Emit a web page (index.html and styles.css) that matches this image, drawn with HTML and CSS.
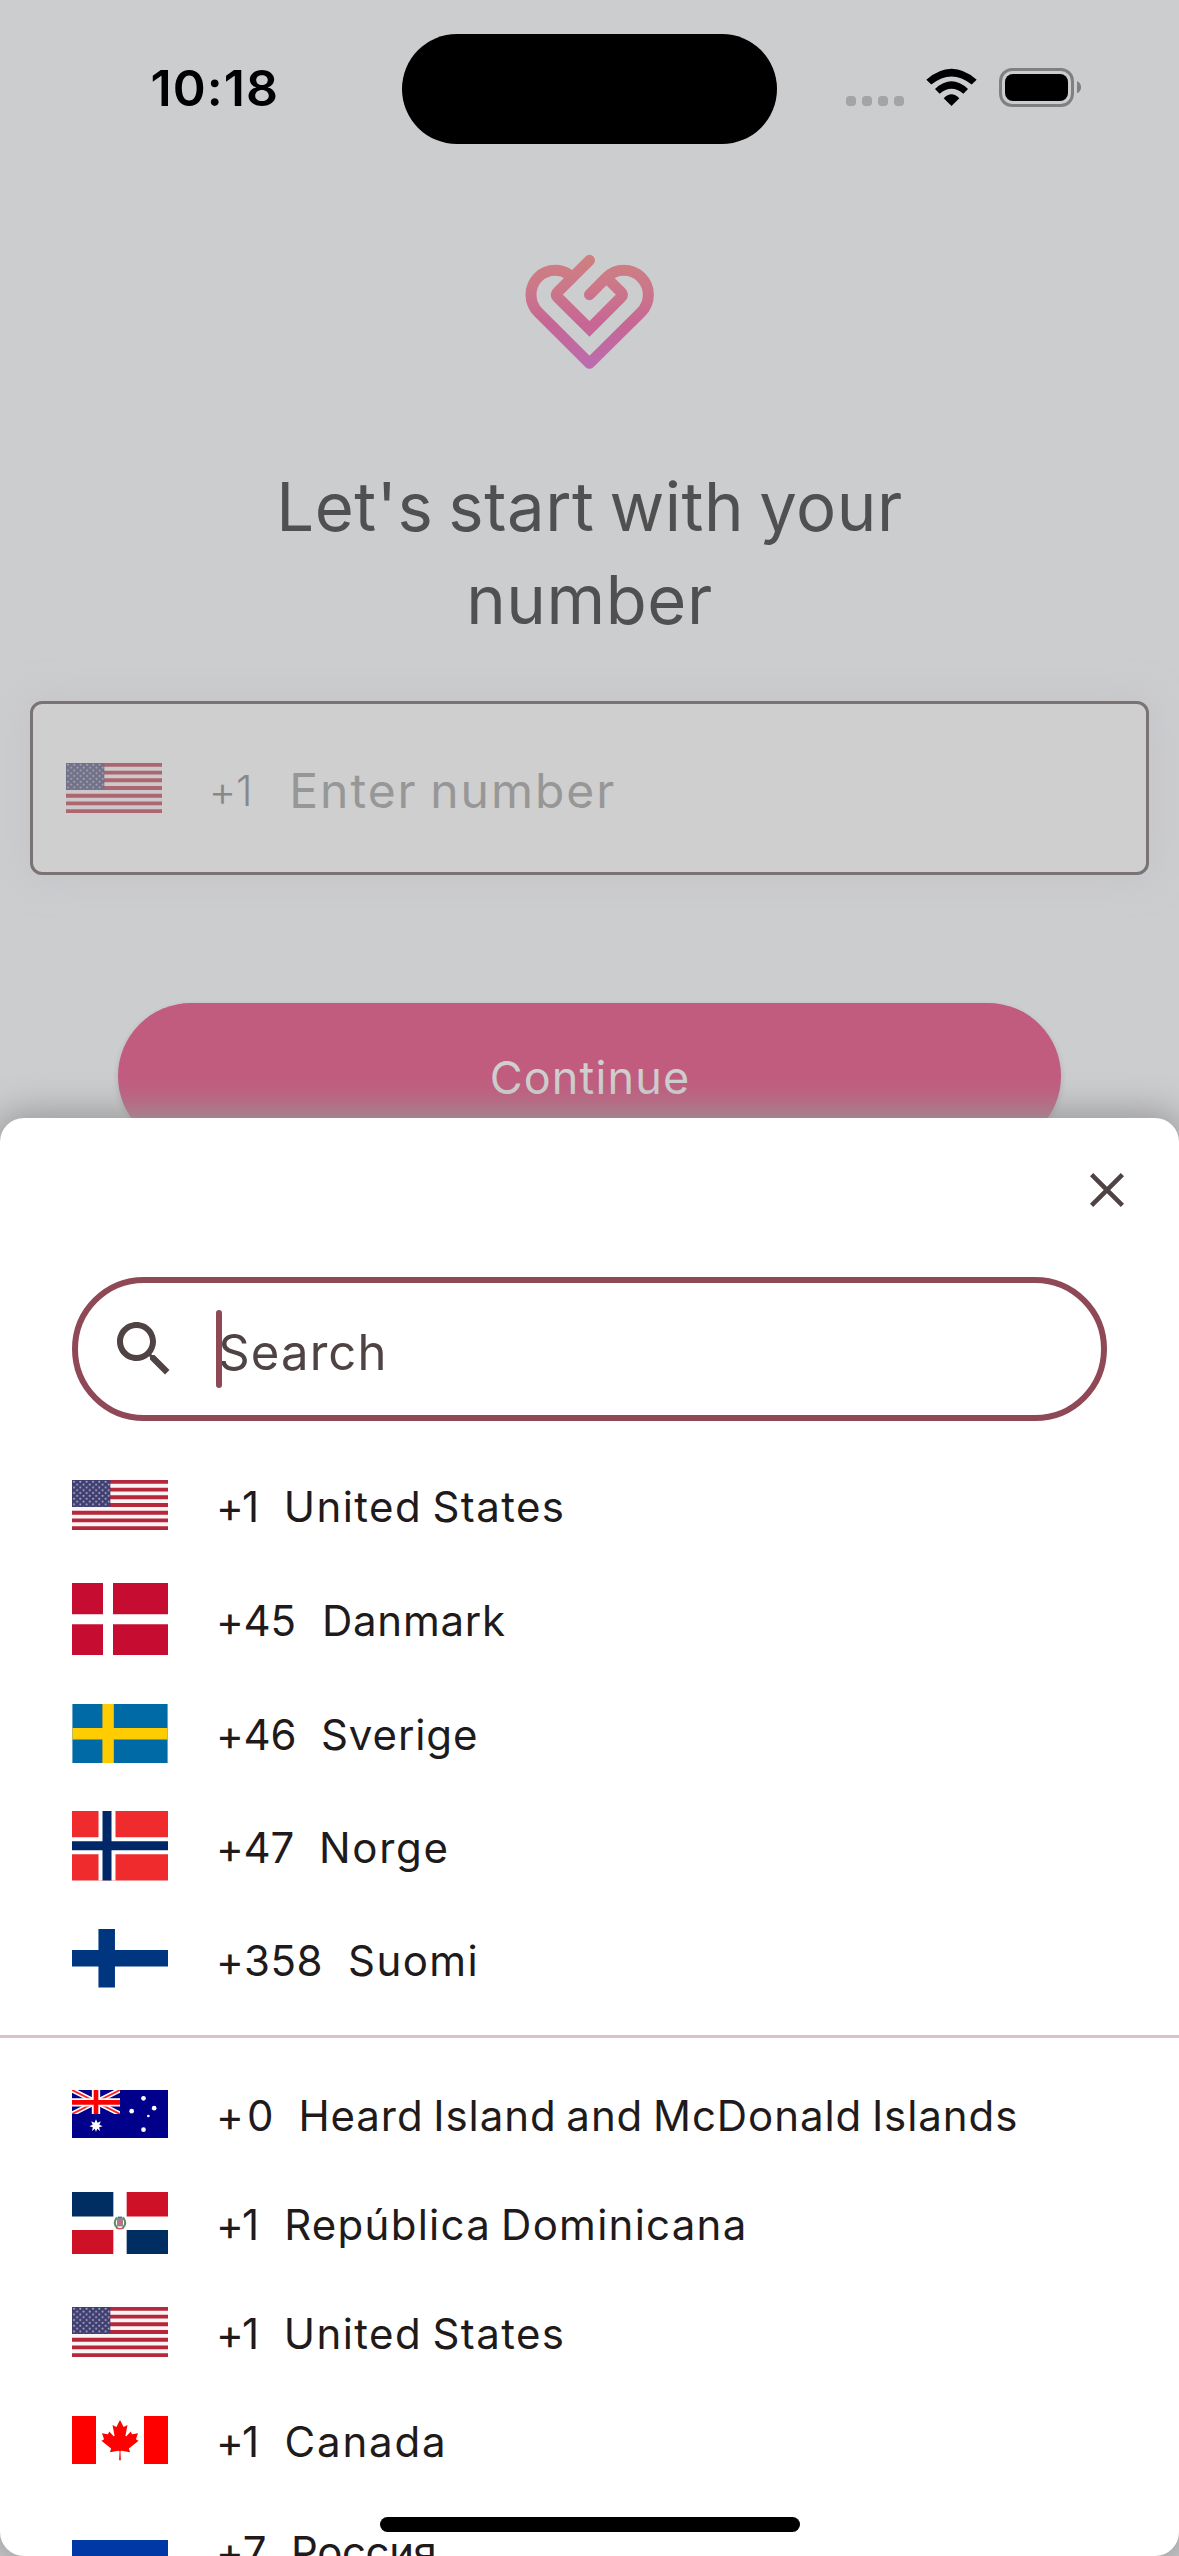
FILE: index.html
```html
<!DOCTYPE html>
<html lang="en">
<head>
<meta charset="utf-8">
<title>Choose country code</title>
<link rel="stylesheet" href="styles.css">
</head>
<body>
<svg class="defs" width="0" height="0" aria-hidden="true">
  <defs>
    <pattern id="stars" width="19" height="17" patternUnits="userSpaceOnUse">
      <circle cx="6" cy="5" r="3.2" fill="#a9a9c6"/>
      <circle cx="15.500" cy="13.500" r="3.2" fill="#a9a9c6"/>
    </pattern>
    <symbol id="flag-us" viewBox="0 0 288 150" preserveAspectRatio="none">
      <rect width="288" height="150" fill="#fbf4f5"/>
      <path d="M0 5.8H288M0 28.8H288M0 51.9H288M0 75H288M0 98.1H288M0 121.2H288M0 144.2H288" stroke="#b5273b" stroke-width="11.6"/>
      <rect width="115" height="81" fill="#3f3e70"/>
      <rect x="2" y="1" width="111" height="78" fill="url(#stars)"/>
    </symbol>
  </defs>
</svg>

<div class="screen">
  <header class="status">
    <span class="time">10:18</span>
    <span class="island"></span>
    <svg class="indicators" viewBox="0 0 900 300">
      <g fill="#a3a4a6">
        <rect x="78" y="168" width="30" height="30" rx="11"/>
        <rect x="126" y="168" width="30" height="30" rx="11"/>
        <rect x="174" y="168" width="30" height="30" rx="11"/>
        <rect x="222" y="168" width="30" height="30" rx="11"/>
      </g>
      <path d="M394.500 198L371 175Q394.500 150 418 175Z"/>
      <path d="M345 147Q394.500 101 444 147L430 161.500Q394.500 131 359 161.500Z"/>
      <path d="M319 119Q394.500 54 470 119L455 133.500Q394.500 85 334 133.500Z"/>
      <rect x="541.500" y="88.500" width="216" height="108" rx="35" fill="none" stroke="#7f8082" stroke-width="9"/>
      <rect x="555" y="102" width="189" height="81" rx="24"/>
      <path d="M771 123Q783 129 783 142T771 160Z" fill="#7f8082"/>
    </svg>
  </header>

  <svg class="logo" viewBox="0 0 540 480" fill="none" stroke="url(#love)" stroke-width="33" stroke-linecap="round">
    <defs>
      <linearGradient id="love" gradientUnits="userSpaceOnUse" x1="0" y1="75" x2="0" y2="417">
        <stop offset="0" stop-color="#cf8080"/>
        <stop offset=".3" stop-color="#cb778a"/>
        <stop offset=".6" stop-color="#c76694"/>
        <stop offset="1" stop-color="#bb6cb0"/>
      </linearGradient>
    </defs>
    <path stroke-linejoin="round" d="M206 133C188 121 176 121 166 121C124 121 93 154 93 194C93 214 101 233 115 247L268.500 400L423 247C437 233 445 214 445 194C445 154 413 121 371 121C350 121 334 128 319 143L268.500 194"/>
    <path d="M268.500 91L172 187Q165 194 172 201L268.500 297L364 201Q371 194 364 187L325 149"/>
  </svg>

  <h1 class="title">Let's start with your<br>number</h1>

  <div class="phone">
    <svg class="flag"><use href="#flag-us"/></svg>
    <span class="phone-code">+1</span>
    <span class="phone-hint">Enter number</span>
  </div>

  <button class="continue">Continue</button>

  <section class="sheet">
    <div class="sheet-head">
      <svg class="close" viewBox="0 0 72 72"><path d="M20.600 20.600L51.400 51.400M51.400 20.600L20.600 51.400" stroke="#4f4344" stroke-width="4.600"/></svg>
    </div>
    <div class="search">
      <svg class="search-icon" viewBox="0 0 24 24" fill="#4f4344"><path d="M15.500 14h-.79l-.28-.27C15.410 12.590 16 11.110 16 9.500 16 5.910 13.090 3 9.500 3S3 5.910 3 9.500 5.910 16 9.500 16c1.610 0 3.090-.59 4.230-1.570l.27.28v.79l5 4.990L20.490 19l-4.990-5zm-6 0C7.010 14 5 11.990 5 9.500S7.010 5 9.500 5 14 7.010 14 9.500 11.990 14 9.500 14z"/></svg>
      <span class="search-hint">Search<i class="caret"></i></span>
    </div>

    <ul class="list">
      <li class="row us">
        <svg class="flag"><use href="#flag-us"/></svg>
        <span class="code">+1</span><span class="name">United States</span>
      </li>
      <li class="row dk">
        <svg class="flag" viewBox="0 0 96 72.500"><path fill="#c60c30" d="M0 0H96V72.500H0z"/><path d="M36 0V72.500M0 36.200H96" stroke="#fff" stroke-width="10"/></svg>
        <span class="code">+45</span><span class="name">Danmark</span>
      </li>
      <li class="row se">
        <svg class="flag" viewBox="0 0 96 60"><path fill="#006aa7" d="M0 0H96V60H0z"/><path d="M36 0V60M0 30H96" stroke="#fecc00" stroke-width="11.500"/></svg>
        <span class="code">+46</span><span class="name">Sverige</span>
      </li>
      <li class="row no">
        <svg class="flag" viewBox="0 0 96 69.500"><path fill="#ef2b2d" d="M0 0H96V69.500H0z"/><path d="M35 0V69.500M0 34.700H96" stroke="#fff" stroke-width="17"/><path d="M35 0V69.500M0 34.700H96" stroke="#002868" stroke-width="9"/></svg>
        <span class="code">+47</span><span class="name">Norge</span>
      </li>
      <li class="row fi">
        <svg class="flag" viewBox="0 0 96 58.500"><path fill="#fff" d="M0 0H96V58.500H0z"/><path d="M34.700 0V58.500M0 29.200H96" stroke="#003580" stroke-width="16.500"/></svg>
        <span class="code">+358</span><span class="name">Suomi</span>
      </li>
    </ul>

    <hr class="divider">

    <ul class="list">
      <li class="row hm">
        <svg class="flag" viewBox="0 0 288 144">
          <path fill="#00008b" d="M0 0H288V144H0z"/>
          <svg width="144" height="72" viewBox="0 0 144 72">
            <path d="M0 0L144 72M144 0L0 72" stroke="#fff" stroke-width="15"/>
            <path d="M0 0L144 72M144 0L0 72" stroke="#f22" stroke-width="5.500"/>
            <path d="M72 0V72M0 37H144" stroke="#fff" stroke-width="25"/>
            <path d="M72 0V72M0 37H144" stroke="#f00" stroke-width="14"/>
          </svg>
          <g fill="#fff">
            <path d="M72 88L76.500 98L86.500 94L82 104L92 109L81.500 111.500L84 123L75.500 116L72 126L68.500 116L60 123L62.500 111.500L52 109L62 104L57.500 94L67.500 98Z"/>
            <circle cx="214.500" cy="25" r="7"/><circle cx="179" cy="63.500" r="7"/>
            <circle cx="246.500" cy="54.500" r="7"/><circle cx="229" cy="78" r="4"/>
            <circle cx="214.500" cy="119" r="7"/>
          </g>
        </svg>
        <span class="code">+0</span><span class="name">Heard Island and McDonald Islands</span>
      </li>
      <li class="row do">
        <svg class="flag" viewBox="0 0 288 187">
          <path fill="#fff" d="M0 0H288V187H0z"/>
          <path fill="#002d62" d="M0 0H124V73H0zM164 114H288V187H164z"/>
          <path fill="#ce1126" d="M164 0H288V73H164zM0 114H124V187H0z"/>
          <path d="M135 76Q121 94 136 108M153 76Q167 94 152 108" stroke="#5d8a62" stroke-width="6" fill="none"/>
          <path fill="#8d8799" d="M135 78H153V103H135z"/>
          <path d="M137 76H151" stroke="#496da2" stroke-width="5"/>
          <path d="M144 80V102M136 91H152" stroke="#c76e74" stroke-width="4"/>
          <path d="M133 108Q144 112 155 108" stroke="#d5545c" stroke-width="5" fill="none"/>
        </svg>
        <span class="code">+1</span><span class="name">República Dominicana</span>
      </li>
      <li class="row us">
        <svg class="flag"><use href="#flag-us"/></svg>
        <span class="code">+1</span><span class="name">United States</span>
      </li>
      <li class="row ca">
        <svg class="flag" viewBox="0 0 9600 4800">
          <path fill="#fff" d="M0 0H9600V4800H0z"/>
          <path fill="#f00" d="M0 0H2400V4800H0zM7200 0H9600V4800H7200zM4890 4430l-45-863a95 95 0 0 1 111-98l859 151-116-320a65 65 0 0 1 20-73l941-762-212-99a65 65 0 0 1-34-79l186-572-542 115a65 65 0 0 1-73-38l-105-247-423 454a65 65 0 0 1-111-57l204-1052-327 189a65 65 0 0 1-91-27l-332-652-332 652a65 65 0 0 1-91 27l-327-189 204 1052a65 65 0 0 1-111 57l-423-454-105 247a65 65 0 0 1-73 38l-542-115 186 572a65 65 0 0 1-34 79l-212 99 941 762a65 65 0 0 1 20 73l-116 320 859-151a95 95 0 0 1 111 98l-45 863z"/>
        </svg>
        <span class="code">+1</span><span class="name">Canada</span>
      </li>
      <li class="row ru">
        <svg class="flag" viewBox="0 0 96 64"><path fill="#fff" d="M0 0H96V22H0z"/><path fill="#0039a6" d="M0 22H96V43H0z"/><path fill="#d52b1e" d="M0 43H96V64H0z"/></svg>
        <span class="code">+7</span><span class="name">Россия</span>
      </li>
    </ul>
  </section>

  <div class="home-indicator"></div>
</div>
</body>
</html>
```
FILE: styles.css
```css
* {
  box-sizing: border-box;
}

body {
  margin: 0;
  background: #cccdcf;
  font-family: Inter, "Liberation Sans", sans-serif;
}

.defs {
  position: absolute;
}

.screen {
  position: relative;
  display: flex;
  flex-direction: column;
  align-items: center;
  width: 1179px;
  height: 2556px;
  overflow: hidden;
  background: #cccdcf;
}

/* Status bar */
.status {
  display: flex;
  align-items: center;
  width: 100%;
  height: 177px;
  padding-left: 150.6px;
}

.time {
  width: 251.4px;
  padding-bottom: 2px;
  font-size: 50px;
  font-weight: 600;
  letter-spacing: 1.05px;
  line-height: 60px;
}

.island {
  width: 375px;
  height: 110px;
  margin-top: 1px;
  border-radius: 55px;
  background: #000;
}

.indicators {
  width: 300px;
  height: 100px;
  margin: 3px 0 0 43px;
}

/* Sign-up form */
.logo {
  width: 180px;
  height: 160px;
  margin-top: 53px;
}

.title {
  margin: 69.6px 0 0;
  color: #505051;
  font-size: 67px;
  font-weight: 400;
  letter-spacing: 0.56px;
  line-height: 93.3px;
  text-align: center;
  word-spacing: -4.5px;
}

.phone {
  display: flex;
  align-items: center;
  width: 1119px;
  height: 174px;
  margin-top: 55px;
  padding-left: 33px;
  border: 3px solid #7a7374;
  border-radius: 12px;
  background: #cfcfcf;
  box-shadow: 0 0 36px rgba(190, 188, 194, 0.6);
}

.flag {
  flex: none;
  width: 96px;
  height: var(--flag-height, 50px);
}

.phone .flag {
  filter: brightness(0.81) opacity(0.6);
}

.phone-code {
  width: 80.4px;
  margin-left: 46.8px;
  padding-top: 4px;
  color: #88888a;
  font-size: 42px;
  font-weight: 300;
  letter-spacing: -0.24px;
}

.phone-hint {
  padding-top: 5px;
  color: #979797;
  font-size: 48px;
  letter-spacing: 2px;
  word-spacing: -3px;
}

.continue {
  width: 943px;
  height: 146px;
  margin-top: 128px;
  padding: 3px 0 0 1px;
  border: 0;
  border-radius: 73px;
  background: #c15c7e;
  box-shadow: 0 3px 6px rgba(0, 0, 0, 0.15);
  color: #cfcfcf;
  font: 400 45px Inter, "Liberation Sans", sans-serif;
  letter-spacing: 1.15px;
}

/* Country picker, laid over the form */
.sheet {
  position: absolute;
  inset: 1118px 0 0;
  overflow: hidden;
  border-radius: 24px;
  background: #fff;
  box-shadow: 0 0 36px 6px #979797;
}

.sheet-head {
  display: flex;
  justify-content: flex-end;
  height: 159px;
  padding: 36px 36px 0;
}

.close {
  width: 72px;
  height: 72px;
}

.search {
  display: flex;
  align-items: center;
  height: 144px;
  margin: 0 72px 30px;
  padding-left: 30px;
  border: 6px solid #8f4956;
  border-radius: 72px;
}

.search-icon {
  width: 72px;
  height: 72px;
}

.search-hint {
  position: relative;
  margin-left: 38.3px;
  padding-top: 6px;
  color: #4f4344;
  font-size: 49px;
  letter-spacing: 1.11px;
}

.caret {
  position: absolute;
  top: -7px;
  left: -2.3px;
  width: 6px;
  height: 78px;
  border-radius: 3px;
  background: #8f4956;
}

.list {
  margin: 0;
  padding: 0;
  list-style: none;
}

.row {
  display: flex;
  align-items: center;
  min-height: 108px;
  padding: 23.9px 72px;
  color: #201a1b;
  font-size: 42px;
  line-height: 54px;
  white-space: nowrap;
}

.code {
  width: var(--code-width);
  margin-left: 48px;
  padding-top: 4px;
  letter-spacing: var(--code-spacing, -0.2px);
}

.name {
  padding-top: 4px;
  letter-spacing: var(--name-spacing);
  word-spacing: -3px;
}

.us { --code-width: 67.8px; --code-spacing: -1.8px; --name-spacing: 1.43px; }
.dk { --flag-height: 72.5px; --code-width: 106px; --name-spacing: 0.74px; }
.se { --flag-height: 59.5px; --code-width: 105px; --name-spacing: 0.9px; }
.no { --flag-height: 69.5px; --code-width: 103px; --name-spacing: 1.68px; }
.fi { --flag-height: 58.5px; --code-width: 132px; --code-spacing: 0.57px; --name-spacing: 1.44px; }
.hm { --flag-height: 48px; --code-width: 82.4px; --code-spacing: 3.2px; --name-spacing: 0.93px; }
.do { --flag-height: 62.5px; --code-width: 68.2px; --code-spacing: -1.8px; --name-spacing: 1.26px; }
.ca { --flag-height: 48px; --code-width: 68.5px; --code-spacing: -1.8px; --name-spacing: 1.82px; }
.ru { --flag-height: 64px; --code-width: 75px; --name-spacing: -0.4px; }

.divider {
  height: 3px;
  margin: 22px 0 22.5px;
  border: 0;
  background: #dcc2c5;
}

.home-indicator {
  position: absolute;
  bottom: 24px;
  left: 380px;
  width: 420px;
  height: 15px;
  border-radius: 8px;
  background: #000;
}
```
